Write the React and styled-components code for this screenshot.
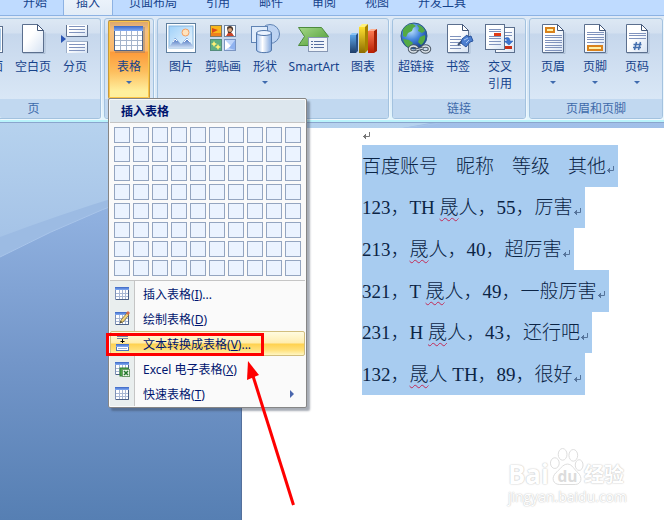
import React from 'react';
import styled, { createGlobalStyle, css } from 'styled-components';


const GlobalStyle = createGlobalStyle`
* { box-sizing: border-box; }
body {
  margin: 0;
  font-family: "Noto Sans", "Noto Sans CJK SC", sans-serif;
  font-size: 12px;
  overflow: hidden;
}
button {
  font: inherit;
  color: inherit;
  border: none;
  background: none;
  padding: 0;
  margin: 0;
  cursor: pointer;
}
svg { display: block; flex: none; }
`;

const Container = styled.div`
display: flex;
flex-direction: column;
min-height: 100vh;
overflow: hidden;
position: relative;
`;

/* ---------- tabs ---------- */

const TabBar = styled.nav`
display: flex;
align-items: flex-end;
gap: 5px;
height: 16px;
padding-left: 11px;
background-color: #bfdbff;
border-bottom: 1px solid #8db2e3;
overflow: hidden;
`;

const Tab = styled.button`
height: 24px;
padding: 0 12px;
line-height: 24px;
color: #15428b;
white-space: nowrap;
${(props) => props.$active && css`
  background: linear-gradient(#f0f6fd, #e2ecf7);
  box-shadow: 0 0 0 1px #8db2e3;
`}
`;

/* ---------- ribbon ---------- */

const Ribbon = styled.div`
display: flex;
gap: 3px;
padding: 2px 0 1px;
background: linear-gradient(#dfeaf7, #cfdff2 16%, #dcebf8 80%, #e3f6fd);
border-bottom: 2px solid #b9f3fb;
`;

const Group = styled.section`
position: relative;
display: flex;
flex-direction: column;
flex: none;
border: 1px solid #a3c2df;
border-radius: 3px;
box-shadow: 1px 1px 0 #eef7fd;
background: linear-gradient(#dde8f4, #d3e0f0 14px, #c6d7ec 15px, #d9e7f6 80px);
${(props) => props.$cut && css`
  width: 101px;
  border-left: none;
  border-radius: 0 3px 3px 0;
`}
`;

const GroupBody = styled.div`
display: flex;
justify-content: flex-end;
height: 80px;
padding: 1px ${(props) => (props.$even ? '3px' : '4px')} 0 ${(props) => (props.$even ? '3px' : '2px')};
${(props) => props.$cut && css`overflow: hidden;`}
`;

const GroupTitle = styled.div`
height: 19px;
line-height: 19px;
text-align: center;
color: #3e6aaa;
background-color: #c1d8f0;
border-radius: 0 0 2px 2px;
${(props) => props.$cut && css`padding-right: 33px;`}
`;

const BigButton = styled.button`
display: flex;
flex-direction: column;
align-items: center;
flex: none;
width: ${(props) => (props.$wide ? '56px' : '42px')};
height: 79px;
padding-top: 2px;
color: #15428b;
line-height: 17px;
${(props) => props.$active && css`
  padding-top: 1px;
  border: 1px solid #c69a3c;
  border-top-color: #8b7654;
  border-radius: 2px;
  background: linear-gradient(#d9a56c, #f6c080 10px, #fcb668 30px, #fd9a3a 31px, #fdbd5c 50px, #ffef9d 70px);
  box-shadow: inset 0 0 0 1px #fcc547;
`}
`;

const ButtonLabel = styled.span`
margin-top: 4px;
text-align: center;
white-space: nowrap;
`;

const DownArrow = styled.span`
margin-top: 6px;
border: 3px solid transparent;
border-top-color: #3f6bae;
border-bottom: none;
`;

/* ---------- drop-down menu ---------- */

const Menu = styled.div`
position: absolute;
top: 79px;
left: 3px;
z-index: 2;
width: 199px;
border: 1px solid #868686;
border-radius: 2px;
background-color: #fafafa;
box-shadow: 3px 3px 2px rgba(60, 70, 90, 0.45);
color: #00156e;
padding: 1px;
`;

const MenuTitle = styled.h2`
margin: 0;
height: 23px;
padding-left: 11px;
line-height: 23px;
font-size: 12px;
font-weight: 700;
background-color: #dde7ee;
border-bottom: 1px solid #c5c5c5;
`;

const SizeGrid = styled.div`
display: grid;
grid-template-columns: repeat(10, 16px);
gap: 3px;
padding: 4px 4px 4px;
border-bottom: 1px solid #c5c5c5;
`;

const SizeCell = styled.button`
height: 16px;
border: 1px solid #94a5c0;
background-color: #ebf3ff;
`;

const MenuList = styled.ul`
margin: 0;
padding: 0;
list-style: none;
background: linear-gradient(to right, #e9eeee 24px, #c5c5c5 24px, #c5c5c5 25px, #fafafa 25px);
`;

const MenuItem = styled.button`
display: flex;
align-items: center;
width: 100%;
height: 25px;
padding: 0 10px 0 3px;
text-align: left;
white-space: nowrap;
border: 1px solid transparent;
border-radius: 2px;
${(props) => props.$active && css`
  border-color: #d2be7e;
  background: linear-gradient(#fffbe0, #ffedae 11px, #ffd14e 12px, #ffe07a 18px, #fff6c2);
`}
`;

const MenuText = styled.span`
flex: 1;
margin-left: 13px;
`;

const SubArrow = styled.span`
border: 4px solid transparent;
border-left: 4px solid #4a66ad;
border-right: none;
`;

/* ---------- document ---------- */

const Workspace = styled.main`
position: relative;
flex: 1;
display: flex;
padding: 5px 0 0 241px;
border-top: 1px solid #8ba5cd;
background: linear-gradient(#a2c0e9, #8fb0df 24%, #7396c9 60%, #567fb3);
`;

const Swoosh = styled.svg`
position: absolute;
top: 0;
left: 0;
`;

const Page = styled.article`
position: relative;
flex: 1;
padding-left: 120px;
border-left: 1px solid #54709c;
background-color: #fff;
`;

const EmptyLine = styled.div`
display: flex;
align-items: center;
height: 17px;
padding: 0 0 2px;
`;

const Lines = styled.div`
display: grid;
grid-template-rows: repeat(6, 1fr);
justify-items: start;
height: 250px;
font-family: "Liberation Serif", "Noto Sans CJK SC", serif;
font-size: 19px;
font-weight: 300;
line-height: 38px;
color: #0b2445;
`;

const Line = styled.p`
display: flex;
align-items: center;
margin: 0;
padding: 2px 3px 0 0;
white-space: pre;
background-color: #a8ccf0;
svg { margin-top: 6px; }
`;

const Columns = styled.span`
display: flex;
gap: 18px;
`;

const Misspelt = styled.span`
text-decoration: underline wavy #c22a55 1px;
text-underline-offset: 3px;
`;

const Watermark = styled.div`
position: absolute;
right: 37px;
bottom: 15px;
font-family: "Open Sans", "Noto Sans CJK SC", sans-serif;
color: #fff;
text-shadow: 0 0 1px #c4c4c4, 0 0 2px #cfcfcf;
`;

const Brand = styled.div`
display: flex;
align-items: flex-end;
margin-bottom: 2px;
font-weight: 700;
`;

const BrandWord = styled.span`
font-size: ${(props) => (props.$small ? '20px' : '26px')};
line-height: ${(props) => (props.$small ? '24px' : '26px')};
`;

const BrandLink = styled.a`
display: block;
font-size: 14px;
line-height: 16px;
color: inherit;
text-decoration: none;
`;

/* ---------- annotations ---------- */

const RedBox = styled.div`
position: absolute;
z-index: 3;
top: 333px;
left: 106px;
width: 158px;
height: 23px;
border: 3px solid #fe0000;
`;

const RedArrow = styled.svg`
position: absolute;
z-index: 3;
top: 360px;
left: 240px;
`;

/* ---------- icons ---------- */

const Defs = () => (
    <svg width="0" height="0" style={{ position: 'absolute' }} aria-hidden="true">
        <defs>
            <linearGradient id="paper" x1="0" y1="0" x2="1" y2="1">
                <stop offset="0.4" stopColor="#fff" /><stop offset="1" stopColor="#d5e2f3" />
            </linearGradient>
            <linearGradient id="head" x1="0" y1="0" x2="0" y2="1">
                <stop offset="0" stopColor="#3a66c4" /><stop offset="1" stopColor="#85aef5" />
            </linearGradient>
            <linearGradient id="sky" x1="0" y1="0" x2="1" y2="1">
                <stop offset="0" stopColor="#9fd0f8" /><stop offset="1" stopColor="#eef8ff" />
            </linearGradient>
            <linearGradient id="hill" x1="0" y1="0" x2="0" y2="1">
                <stop offset="0" stopColor="#3f69bb" /><stop offset="1" stopColor="#cfe0f5" />
            </linearGradient>
            <linearGradient id="tube" x1="0" y1="0" x2="1" y2="0">
                <stop offset="0" stopColor="#9fc0ee" /><stop offset="0.4" stopColor="#fff" /><stop offset="1" stopColor="#7fa6dd" />
            </linearGradient>
            <linearGradient id="green" x1="0" y1="0" x2="1" y2="1">
                <stop offset="0" stopColor="#a6d889" /><stop offset="1" stopColor="#4c9a33" />
            </linearGradient>
            <linearGradient id="blueBar" x1="0" y1="0" x2="0" y2="1">
                <stop offset="0" stopColor="#5ba4e8" /><stop offset="1" stopColor="#1d3c68" />
            </linearGradient>
            <linearGradient id="goldBar" x1="0" y1="0" x2="0" y2="1">
                <stop offset="0" stopColor="#ffe030" /><stop offset="1" stopColor="#8d6c00" />
            </linearGradient>
            <linearGradient id="redBar" x1="0" y1="0" x2="0" y2="1">
                <stop offset="0" stopColor="#fb7a50" /><stop offset="1" stopColor="#b81d00" />
            </linearGradient>
            <radialGradient id="globe" cx="0.4" cy="0.3" r="0.7">
                <stop offset="0" stopColor="#b8defc" /><stop offset="0.5" stopColor="#4586dc" /><stop offset="1" stopColor="#163f96" />
            </radialGradient>
            <linearGradient id="glow" x1="0" y1="0" x2="0" y2="1">
                <stop offset="0" stopColor="#b6d2ee" /><stop offset="1" stopColor="#a5c3e7" />
            </linearGradient>
        </defs>
    </svg>
);

const Icon = ({ children }) => (
    <svg width="32" height="32" viewBox="0 0 32 32" aria-hidden="true">{children}</svg>
);

const Sheet = () => (
    <>
        <path d="M6 31.5h22V10" fill="none" stroke="#8fa3bd" opacity="0.5" />
        <path d="M5.5 2.5h15l6 6v22h-21z" fill="url(#paper)" stroke="#5b6f8e" />
        <path d="M20.5 2.5v6h6z" fill="#fff" stroke="#44587a" />
    </>
);

const textRows = (x1, x2, ys) => ys.map((y) => (
    <path key={y} d={`M${x1} ${y}.5H${x2}`} stroke="#8093bd" />
));

const BlankIcon = () => <Icon><Sheet /></Icon>;

const CoverIcon = () => (
    <Icon>
        <rect x="4.5" y="4.5" width="23" height="26" fill="#fff" stroke="#5b6f8e" />
        <rect x="7" y="7" width="18" height="21" fill="#8fc4f3" stroke="#4e8fd0" />
    </Icon>
);

const BreakIcon = () => (
    <Icon>
        <path d="M7.5 3v11.5h21V3" fill="url(#paper)" stroke="#5f7291" />
        <path d="M7.5 31V19.5h21V31" fill="url(#paper)" stroke="#9eb0ca" />
        <path d="M28.5 3v11.5M28.5 19.5V31" stroke="#5f7291" />
        {textRows(10, 26, [4, 7, 10, 22, 25, 28])}
        <path d="M2 13l5 4-5 4z" fill="#2b56b5" />
    </Icon>
);

const TableIcon = () => (
    <Icon>
        <rect x="2" y="5" width="30" height="26" fill="#54688a" opacity="0.3" />
        <rect x="1.5" y="4.5" width="28" height="24" fill="#fff" stroke="#51658a" />
        <rect x="1" y="4" width="29" height="5" fill="url(#head)" />
        <path d="M2 13.5h27M2 18.5h27M2 23.5h27M7.5 9v19M13.5 9v19M18.5 9v19M24.5 9v19" stroke="#a5b4cb" />
    </Icon>
);

const PictureIcon = () => (
    <Icon>
        <rect x="1.5" y="1.5" width="29" height="29" fill="#fff" stroke="#5f7f9f" />
        <rect x="4" y="4" width="24" height="22" fill="url(#sky)" stroke="#86b6df" />
        <circle cx="20.5" cy="10.5" r="3.5" fill="#ffe3bd" stroke="#f3a063" />
        <path d="M4 25l3-4 3-5 4 4 2 2 6-6 6 8v2H4z" fill="url(#hill)" />
        <path d="M8 20l2-3 2 2M19 20l3-3 3 3" stroke="#fff" fill="none" />
    </Icon>
);

const ClipArtIcon = () => (
    <Icon>
        <rect x="3.5" y="3.5" width="11" height="11" fill="#f9b71c" stroke="#7e7a66" />
        <path d="M4 11h10v3H4z" fill="#f0801c" /><path d="M5 6l6 2-6 3z" fill="#dd4b18" />
        <rect x="17.5" y="3.5" width="11" height="11" fill="#fff" stroke="#6d83a0" />
        <path d="M20 6c0-3 7-3 6 2l-2 3h-3z" fill="#4c3a30" /><circle cx="23" cy="8" r="2" fill="#dba37c" /><path d="M19 14l2-3h4l2 3z" fill="#c7442a" />
        <rect x="3.5" y="17.5" width="11" height="11" fill="#60af83" stroke="#548d7c" />
        <path d="M7 19l1 2 2 1-2 1-1 2-1-2-2-1 2-1zM11 22l1 2 2 1-2 1-1 2-1-2-2-1 2-1z" fill="#fff176" />
        <rect x="17.5" y="17.5" width="11" height="11" fill="#bfd5fa" stroke="#7b95c2" />
        <path d="M18 18l6 6-6 4z" fill="#fff" /><path d="M28 18l-6 8 6 2z" fill="#8fb2f0" />
    </Icon>
);

const ShapesIcon = () => (
    <Icon>
        <circle cx="21" cy="12" r="9.5" fill="#bdd3f2" stroke="#5f83b4" />
        <rect x="2.5" y="4.5" width="16" height="16" fill="#e0ecfb" stroke="#5f83b4" />
        <path d="M7.5 11v17c0 3.5 15 3.5 15 0V11z" fill="url(#tube)" stroke="#5277ab" />
        <ellipse cx="15" cy="11" rx="7.5" ry="2.5" fill="#eaf3ff" stroke="#5277ab" />
    </Icon>
);

const SmartArtIcon = () => (
    <Icon>
        <path d="M.5 5.5h23l7 9-7 9H.5l6-9z" fill="url(#green)" stroke="#4d8b3c" />
        <rect x="10.5" y="15.5" width="19" height="14" fill="#f0f4fa" stroke="#8797b3" />
        <path d="M13 19.5h2M13 22.5h2M13 25.5h2M16 19.5h10M16 22.5h10M16 25.5h10" stroke="#566ea0" />
    </Icon>
);

const ChartIcon = () => (
    <Icon>
        <path d="M3 13h6v18H3z" fill="url(#blueBar)" /><path d="M3 13l2-2h6l-2 2z" fill="#8cc4f5" /><path d="M9 13l2-2v18l-2 2z" fill="#274f86" />
        <path d="M12 5h6v26h-6z" fill="url(#goldBar)" /><path d="M12 5l3-3h6l-3 3z" fill="#fff27e" /><path d="M18 5l3-3v26l-3 3z" fill="#a88300" />
        <path d="M21 9h6v22h-6z" fill="url(#redBar)" /><path d="M21 9l3-2h6l-3 2z" fill="#ffb090" /><path d="M27 9l3-2v22l-3 2z" fill="#a32206" />
    </Icon>
);

const LinkIcon = () => (
    <Icon>
        <circle cx="14" cy="14" r="13" fill="url(#globe)" stroke="#2d5a86" />
        <path d="M3 8c2-4 6-6 10-6l3 2-3 2-1 3-4 2-2 4-3-1zM17 3c4 0 7 3 8 6l-3 2-4-2 1-3zM3 17l6 1 4 3-2 3 1 2C7 26 4 22 3 17zM20 15l5-2c1 4-1 8-4 10l-3-3z" fill="#54aa44" />
        <ellipse cx="13.5" cy="27" rx="4" ry="3" fill="none" stroke="#4d5a67" strokeWidth="3.5" />
        <ellipse cx="25.5" cy="27" rx="4" ry="3" fill="none" stroke="#4d5a67" strokeWidth="3.5" />
        <ellipse cx="13.5" cy="27" rx="4" ry="3" fill="none" stroke="#dce3e9" strokeWidth="1.5" />
        <ellipse cx="25.5" cy="27" rx="4" ry="3" fill="none" stroke="#dce3e9" strokeWidth="1.5" />
        <path d="M16 28l7-2" stroke="#4d5a67" strokeWidth="3" /><path d="M16 28l7-2" stroke="#dce3e9" />
    </Icon>
);

const BookmarkIcon = () => (
    <Icon>
        <Sheet />
        {textRows(8, 19, [14, 17, 20, 23, 26])}
        <path d="M16 23l6-6" stroke="#3b4e6c" strokeWidth="2" />
        <path d="M20 17l5-4 1 2 3-1 2 5-3 1-4 5-5-4z" fill="#4c7fd0" stroke="#2a559f" />
        <path d="M22 18l4-2M24 21l3-3" stroke="#abc9f5" />
    </Icon>
);

const CrossRefIcon = () => (
    <Icon>
        <rect x="11.5" y="5.5" width="19" height="25" fill="url(#paper)" stroke="#5b6f8e" />
        {textRows(20, 28, [10, 13])}
        <rect x="21" y="24" width="7" height="3" fill="#c92f16" />
        <rect x="1.5" y="2.5" width="19" height="25" fill="url(#paper)" stroke="#5b6f8e" />
        {textRows(5, 17, [7, 9, 14, 16, 19, 22])}
        <rect x="10" y="11" width="7" height="3" fill="#e23b16" />
        <path d="M20 17c4-3 6-1 6 2h3l-4 4-5-4h3c0-2-1-2-3-2z" fill="#3b74d1" stroke="#285aaf" strokeWidth="0.5" />
    </Icon>
);

const HeaderIcon = () => (
    <Icon>
        <Sheet />
        {textRows(8, 25, [13, 15, 18, 20, 23, 25, 28])}
        <rect x="9" y="6" width="8" height="4" fill="#fff0a8" stroke="#d9821c" strokeWidth="2" />
    </Icon>
);

const FooterIcon = () => (
    <Icon>
        <Sheet />
        {textRows(8, 25, [10, 12, 15, 17, 20])}
        <rect x="9" y="24" width="14" height="4" fill="#fff0a8" stroke="#d9821c" strokeWidth="2" />
    </Icon>
);

const NumberIcon = () => (
    <Icon>
        <Sheet />
        {textRows(8, 25, [11, 13, 16])}
        <path d="M15.5 20l-2 8M19.5 20l-2 8M12.5 22.5h8M12 25.5h8" stroke="#446fae" strokeWidth="1.5" />
    </Icon>
);

const SmallTable = () => (
    <>
        <path d="M1.5 1.5h13v12h-13z" fill="#fff" stroke="#7d90b5" />
        <path d="M1 1h14v3H1z" fill="url(#head)" />
        <path d="M2 7.5h12M2 10.5h12M5.5 4v9M8.5 4v9M11.5 4v9" stroke="#a9b8d4" />
        <path d="M14.5 4v9.5H2" fill="none" stroke="#4a6088" />
    </>
);

const SmallIcon = ({ kind }) => (
    <svg width="16" height="16" viewBox="0 0 16 16" aria-hidden="true">
        {kind !== 'convert' && <SmallTable />}
        {kind === 'draw' && <>
            <path d="M6 12l1-3 6-7 2 2-6 7z" fill="#f3d57a" stroke="#6b5a32" strokeWidth="0.75" />
            <path d="M12 2l2-2 2 2-2 2z" fill="#d36b4c" />
            <path d="M6 12l1-2 1 1z" fill="#222" />
        </>}
        {kind === 'excel' && <>
            <rect x="6" y="7" width="8" height="8" fill="#4fa647" stroke="#2c7d32" />
            <rect x="8.5" y="8.5" width="7" height="7" fill="#e9f5e6" stroke="#6a9a68" />
            <path d="M10 10l4 4M14 10l-4 4" stroke="#22762c" strokeWidth="1.5" />
        </>}
        {kind === 'convert' && <>
            <path d="M3 .5h11M3 2.5h11" stroke="#7184a4" />
            <path d="M8.5 3v4M6.5 5.5h4" stroke="#000" />
            <rect x="2.5" y="9.5" width="12" height="5" fill="#fff" stroke="#4d73bb" />
            <path d="M2 8h13v3H2z" fill="url(#head)" />
            <path d="M4 12.5h9" stroke="#9eb2d6" />
        </>}
    </svg>
);

const ReturnMark = ({ color = '#56749b' }) => (
    <svg width="9" height="9" viewBox="0 0 9 9" aria-hidden="true">
        <path d="M7.5 1v4.5H1M3.5 3v5M2.5 4v3" fill="none" stroke={color} />
    </svg>
);

const Paw = () => (
    <svg width="35" height="40" viewBox="0 0 36 40" aria-hidden="true">
        <g fill="#fff" stroke="#dcdcdc">
            <ellipse cx="6" cy="16" rx="4.5" ry="5.5" />
            <ellipse cx="14" cy="7" rx="4.5" ry="6" />
            <ellipse cx="25" cy="8" rx="4.5" ry="6" />
            <ellipse cx="31" cy="18" rx="4" ry="5.5" />
            <path d="M19 17c5 0 7 6 11 9 5 5 3 12-3 12H11c-7 0-9-7-4-12 4-3 7-9 12-9z" />
        </g>
        <text x="19" y="35" textAnchor="middle" fontSize="16" fontWeight="700" fontFamily="Open Sans" fill="#dcdcdc" style={{ textShadow: 'none' }}>du</text>
    </svg>
);

/* ---------- data ---------- */

const tabs = ['开始', '插入', '页面布局', '引用', '邮件', '审阅', '视图', '开发工具'];

const groups = [
    {
        title: '页', cut: true, items: [
            { label: '封面', icon: CoverIcon },
            { label: '空白页', icon: BlankIcon },
            { label: '分页', icon: BreakIcon },
        ]
    },
    { title: '表格', menu: true, items: [{ label: '表格', icon: TableIcon, arrow: true, active: true }] },
    {
        title: '插图', items: [
            { label: '图片', icon: PictureIcon },
            { label: '剪贴画', icon: ClipArtIcon },
            { label: '形状', icon: ShapesIcon, arrow: true },
            { label: 'SmartArt', icon: SmartArtIcon, wide: true },
            { label: '图表', icon: ChartIcon },
        ]
    },
    {
        title: '链接', items: [
            { label: '超链接', icon: LinkIcon },
            { label: '书签', icon: BookmarkIcon },
            { label: <>交叉<br />引用</>, icon: CrossRefIcon },
        ]
    },
    {
        title: '页眉和页脚', items: [
            { label: '页眉', icon: HeaderIcon, arrow: true },
            { label: '页脚', icon: FooterIcon, arrow: true },
            { label: '页码', icon: NumberIcon, arrow: true },
        ]
    },
];

const menuItems = [
    { text: '插入表格', hotkey: 'I', dots: true, kind: 'table' },
    { text: '绘制表格', hotkey: 'D', kind: 'draw' },
    { text: '文本转换成表格', hotkey: 'V', dots: true, kind: 'convert', active: true },
    { text: 'Excel 电子表格', hotkey: 'X', kind: 'excel' },
    { text: '快速表格', hotkey: 'T', kind: 'table', sub: true },
];

const lines = [
    ['123，TH ', '人，55，厉害'],
    ['213，', '人，40，超厉害'],
    ['321，T ', '人，49，一般厉害'],
    ['231，H ', '人，43，还行吧'],
    ['132，', '人 TH，89，很好'],
];


const TableMenu = () => (
    <Menu>
        <MenuTitle>插入表格</MenuTitle>
        <SizeGrid>
            {Array.from({ length: 80 }, (_, i) => (
                <SizeCell key={i} aria-label={`${(i % 10) + 1}x${Math.floor(i / 10) + 1}`} />
            ))}
        </SizeGrid>
        <MenuList>
            {menuItems.map((item) => (
                <li key={item.text}>
                    <MenuItem $active={item.active}>
                        <SmallIcon kind={item.kind} />
                        <MenuText>{item.text}(<u>{item.hotkey}</u>){item.dots && '...'}</MenuText>
                        {item.sub && <SubArrow />}
                    </MenuItem>
                </li>
            ))}
        </MenuList>
    </Menu>
);

const App = () => {

    return (
        <Container>
            <GlobalStyle />
            <Defs />
            <TabBar>
                {tabs.map((tab) => <Tab key={tab} $active={tab === '插入'}>{tab}</Tab>)}
            </TabBar>

            <Ribbon>
                {groups.map((group) => (
                    <Group key={group.title} $cut={group.cut}>
                        <GroupBody $cut={group.cut} $even={group.menu}>
                            {group.items.map((item, i) => (
                                <BigButton key={i} $wide={item.wide} $active={item.active}>
                                    <item.icon />
                                    <ButtonLabel>{item.label}</ButtonLabel>
                                    {item.arrow && <DownArrow />}
                                </BigButton>
                            ))}
                        </GroupBody>
                        <GroupTitle $cut={group.cut}>{!group.menu && group.title}</GroupTitle>
                        {group.menu && <TableMenu />}
                    </Group>
                ))}
            </Ribbon>

            <Workspace>
                <Swoosh width="664" height="140" viewBox="0 0 664 140" aria-hidden="true">
                    <path d="M0 0H440Q200 30 0 134z" fill="#9cbbe3" />
                    <path d="M0 0H430Q190 42 0 114z" fill="url(#glow)" />
                    <path d="M440 0Q200 30 0 134" fill="none" stroke="#a9c5ea" />
                </Swoosh>
                <Page>
                    <EmptyLine><ReturnMark color="#777" /></EmptyLine>
                    <Lines>
                        <Line>
                            <Columns>
                                <span>百度账号</span>
                                <span>昵称</span>
                                <span>等级</span>
                                <span>其他</span>
                            </Columns>
                            <ReturnMark />
                        </Line>
                        {lines.map(([before, after]) => (
                            <Line key={before + after}>
                                <span>{before}<Misspelt>晟</Misspelt>{after}</span>
                                <ReturnMark />
                            </Line>
                        ))}
                    </Lines>
                    <Watermark>
                        <Brand>
                            <BrandWord>Bai</BrandWord>
                            <Paw />
                            <BrandWord $small>经验</BrandWord>
                        </Brand>
                        <BrandLink href="#">jingyan.baidu.com</BrandLink>
                    </Watermark>
                </Page>
            </Workspace>

            <RedBox />
            <RedArrow width="60" height="150" viewBox="0 0 60 150" aria-hidden="true">
                <path d="M13 16L53.5 145" stroke="#fe0000" strokeWidth="3" />
                <path d="M8 1l11 14-12 5z" fill="#fe0000" />
            </RedArrow>
        </Container>
    )
}

export default App;
